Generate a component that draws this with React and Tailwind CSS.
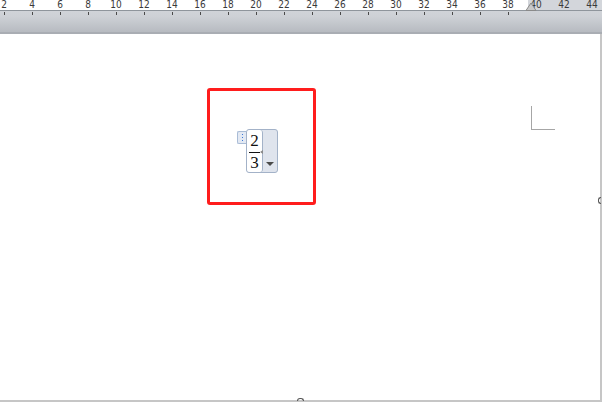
import React from "react";

const labels = [2, 4, 6, 8, 10, 12, 14, 16, 18, 20, 22, 24, 26, 28, 30, 32, 34, 36, 38, 40, 42, 44];

function Ruler() {
  return (
    <div className="relative h-[34px] w-full overflow-hidden bg-gradient-to-b from-[#d7dade] via-[#cdd0d5] to-[#b4b8be]">
      {/* number strip */}
      <div className="flex h-[10px] w-full">
        <div className="h-full w-[528px] bg-white" />
        <div className="h-full flex-1 bg-[#d3d6db]" />
      </div>
      <div className="h-px w-full bg-[#8f959c]" />
      <div className="absolute left-[-10px] top-0 flex">
        {labels.map((n) => (
          <div key={n} className="flex w-[28px] flex-col items-center">
            <span className="text-[10px] leading-[10px] text-[#3a3a3a]" style={{ fontFamily: "'DejaVu Sans Condensed', 'DejaVu Sans', sans-serif" }}>
              {n}
            </span>
            {n <= 38 && <span className="mt-[2px] h-[3px] w-px bg-[#4a4a4a]" />}
          </div>
        ))}
      </div>
      {/* hanging indent marker */}
      <svg className="absolute left-[525px] top-[1px]" width="12" height="10" viewBox="0 0 12 10">
        <path d="M1 9.5 L6 2 L11 9.5 Z" fill="#c9c9c9" stroke="#8a8a8a" strokeWidth="1" />
      </svg>
      <div className="absolute bottom-0 left-0 h-[2px] w-full bg-[#a9adb3]" />
    </div>
  );
}

function Equation() {
  return (
    <div className="flex items-start">
      <div className="mt-[2px] flex h-[13px] w-[9px] flex-col items-center justify-center gap-[2px] rounded-l-[2px] border border-r-0 border-[#a9bcd6] bg-[#e3e9f3]">
        <span className="h-px w-px bg-[#3a78d8]" />
        <span className="h-px w-px bg-[#3a78d8]" />
        <span className="h-px w-px bg-[#3a78d8]" />
      </div>
      <div className="flex h-[44px] w-[32px] items-stretch rounded-[3px] border border-[#a3b2c8] bg-[#dfe4ed]">
        <div className="flex w-[16px] flex-col items-center rounded-[3px] border-r border-[#a3b2c8] bg-white pt-[2px]" style={{ fontFamily: "'Liberation Serif', 'DejaVu Serif', serif" }}>
          <span className="text-[17px] leading-[17px] text-[#111]">2</span>
          <div className="relative mt-[3px] h-px w-[11px] bg-[#111]">
            <span className="absolute left-[11px] top-[-2px] h-0 w-0 border-y-[2px] border-r-[3px] border-y-transparent border-r-[#8a8a8a]" />
          </div>
          <span className="mt-[1px] text-[17px] leading-[17px] text-[#111]">3</span>
        </div>
        <div className="flex flex-1 items-end justify-center pb-[6px]">
          <span className="h-0 w-0 border-x-[4px] border-t-[4px] border-x-transparent border-t-[#4a4a4a]" />
        </div>
      </div>
    </div>
  );
}

export default function App() {
  return (
    <div className="flex h-[402px] w-[602px] flex-col bg-white">
      <Ruler />
      <div className="flex flex-1">
        <div className="relative flex flex-1">
          <div className="ml-[207px] mt-[54px] h-[117px] w-[109px] rounded-[3px] border-[3px] border-[#ff1d1d] pl-[27px] pt-[38px]">
            <Equation />
          </div>
          <div className="ml-[215px] mt-[72px] h-[24px] w-[24px] border-b border-l border-[#a6a6a6]" />
        </div>
        <div className="relative w-[2px] bg-[#c6c6c6]">
          <span className="absolute left-[-2px] top-[163px] h-[7px] w-[3px] rounded-l-full border border-r-0 border-[#555]" />
        </div>
      </div>
      <div className="relative h-[2px] w-full bg-[#c6c6c6]">
        <span className="absolute left-[297px] top-[-2px] h-[3px] w-[7px] rounded-t-full border border-b-0 border-[#555]" />
      </div>
    </div>
  );
}
